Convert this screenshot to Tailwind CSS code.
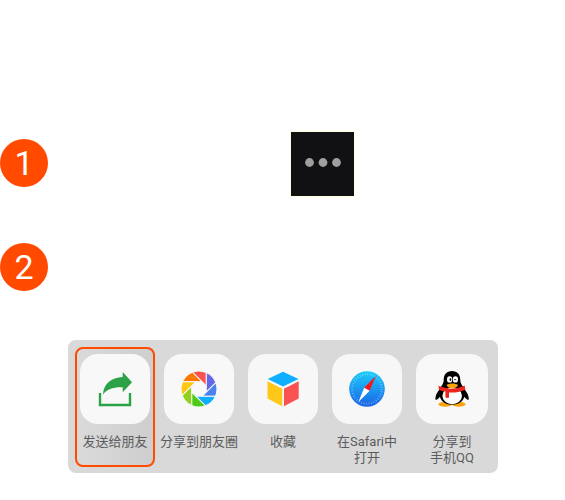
<!DOCTYPE html>
<html lang="zh-CN">
<head>
<meta charset="utf-8">
<meta name="viewport" content="width=device-width, initial-scale=1">
<title>发送给朋友</title>
<script src="https://cdn.jsdelivr.net/npm/@tailwindcss/browser@4"></script>
</head>
<body class="bg-white font-['Roboto','Noto_Sans_CJK_SC',sans-serif]">
<main class="pt-[132px]">
  <ol>
    <li class="flex items-start">
      <div class="pt-[7px]"><span class="flex size-12 items-center justify-center rounded-full bg-[#ff4a00] text-[34px] leading-none text-white">1</span></div>
      <button type="button" aria-label="更多" class="ml-[243px] flex h-16 w-[63px] items-center justify-center bg-[#111113] ring-1 ring-[#ffffdc]">
        <svg class="h-16 w-[63px]" viewBox="0 0 63 64" fill="#9f9f9f"><circle cx="18.5" cy="30.5" r="4.4"/><circle cx="32" cy="30.5" r="4.4"/><circle cx="45.5" cy="30.5" r="4.4"/></svg>
      </button>
    </li>
    <li class="pt-[47px]">
      <span class="flex size-12 items-center justify-center rounded-full bg-[#ff4a00] text-[34px] leading-none text-white">2</span>
      <div class="mt-[49px] ml-[68px] flex w-fit gap-1 rounded-lg bg-[#d9d9d9] pt-[7px] pr-[5px] pb-[6px] pl-[7px] text-[13px] leading-4 text-[#5c5c5c]">
        <button type="button" class="flex h-[120px] w-20 flex-col items-center rounded-lg border-2 border-[#ff4a00] bg-linear-to-r from-[#dadada] to-[#cecece] pt-[5px] whitespace-nowrap">
          <svg class="size-[70px] rounded-[18px] bg-[#f8f8f8]" viewBox="0 0 70 70">
            <path d="M20 39V51H50V39" fill="none" stroke="#2ba245" stroke-width="2.4"/>
            <path d="M52 28.3L42.7 18V23C31 23.5 23.5 30 23 40.5C27 35 33 33 42.7 33.3V38.3Z" fill="#2ba245"/>
          </svg>
          <span class="mt-2.5">发送给朋友</span>
        </button>
        <button type="button" class="flex h-[120px] w-20 flex-col items-center pt-[7px] whitespace-nowrap">
          <svg class="size-[70px] rounded-[18px] bg-[#f8f8f8]" viewBox="0 0 70 70">
            <defs><path id="blade" d="M-16.4 -7.3A18 18 0 0 1 -6.4 -16.8L3 -7.3Z"/></defs>
            <g transform="translate(35 35)" stroke="#f8f8f8" stroke-width="1">
              <use href="#blade" fill="#ff7900"/>
              <use href="#blade" fill="#fa5151" transform="rotate(45)"/>
              <use href="#blade" fill="#6467e6" transform="rotate(90)"/>
              <use href="#blade" fill="#4b82ee" transform="rotate(135)"/>
              <use href="#blade" fill="#10aeff" transform="rotate(180)"/>
              <use href="#blade" fill="#4ecb18" transform="rotate(225)"/>
              <use href="#blade" fill="#91d11d" transform="rotate(270)"/>
              <use href="#blade" fill="#ffc718" transform="rotate(315)"/>
            </g>
          </svg>
          <span class="mt-2.5">分享到朋友圈</span>
        </button>
        <button type="button" class="flex h-[120px] w-20 flex-col items-center pt-[7px] whitespace-nowrap">
          <svg class="size-[70px] rounded-[18px] bg-[#f7f7f7]" viewBox="0 0 70 70">
            <path d="M19.7 25L35 17.7L50.5 25L35 32.6Z" fill="#10aeff"/>
            <path d="M19.5 27.2L34.2 34.8V52.2L19.5 44.6Z" fill="#ffc718"/>
            <path d="M50.7 27.2L36 34.8V52.2L50.7 44.6Z" fill="#fa5151"/>
          </svg>
          <span class="mt-2.5">收藏</span>
        </button>
        <button type="button" class="flex h-[120px] w-20 flex-col items-center pt-[7px] whitespace-nowrap">
          <svg class="size-[70px] rounded-[18px] bg-[#f7f7f7]" viewBox="0 0 70 70">
            <defs><linearGradient id="sky" x2="0" y2="1"><stop stop-color="#1bcdfb"/><stop offset="1" stop-color="#1b63e6"/></linearGradient></defs>
            <circle cx="35" cy="35" r="17.8" fill="url(#sky)"/>
            <circle cx="35" cy="35" r="14.8" fill="none" stroke="#fff" stroke-opacity=".45" stroke-width="2" stroke-dasharray=".7 1.88"/>
            <path d="M43.8 22L32.2 33.8L37.6 36.8Z" fill="#f8161b"/>
            <path d="M26.4 48L32.2 33.8L37.6 36.8Z" fill="#fff"/>
          </svg>
          <span class="mt-2.5">在Safari中<br>打开</span>
        </button>
        <button type="button" class="flex h-[120px] w-[82px] flex-col items-center pt-[7px] whitespace-nowrap">
          <svg class="h-[70px] w-[72px] rounded-[18px] bg-[#f8f8f8]" viewBox="0 0 72 70">
            <ellipse cx="29.2" cy="50.2" rx="6.6" ry="2.5" fill="#faa40a"/>
            <ellipse cx="42.8" cy="50.2" rx="6.6" ry="2.5" fill="#faa40a"/>
            <path d="M36 17C30.5 17 27.7 20.5 27.7 26C27.7 30 25 32 23.6 35.5C21 38.5 19 42 19.4 45.5C20.5 46.6 22.5 44.8 23.8 42.8C25.5 48 30 50.8 36 50.8C42 50.8 46.8 48 48.4 42.8C49.8 44.8 51.6 46.6 52.8 45.5C53.2 42 51 38.5 48.6 35.5C47 32 44.3 30 44.3 26C44.3 20.5 41.5 17 36 17Z" fill="#000"/>
            <ellipse cx="36.2" cy="41.8" rx="9.8" ry="8.4" fill="#fff"/>
            <path d="M22.6 31.8C31 35.6 41 35.6 48.6 31.6L49.4 35.8C43 38.6 37 38.8 33 38.4V43.6C32 44.2 30.2 44 29.4 43.2V37.6C26.5 37.2 24.5 36.4 22.8 35.4Z" fill="#ed251d"/>
            <ellipse cx="33.6" cy="25.4" rx="2.6" ry="3.2" fill="#fff"/>
            <ellipse cx="39.4" cy="25.4" rx="2.6" ry="3.2" fill="#fff"/>
            <ellipse cx="34.4" cy="25.6" rx=".9" ry="1.3" fill="#000"/>
            <path d="M38.2 26.2Q39.1 23.8 40.2 26.2" fill="none" stroke="#000" stroke-width=".8"/>
            <path d="M30.6 31C33 29 39.4 29 42 31C41.4 33.2 38.8 34.3 36.3 34.3C33.8 34.3 31.2 33.2 30.6 31Z" fill="#faa40a"/>
          </svg>
          <span class="mt-2.5">分享到<br>手机QQ</span>
        </button>
      </div>
    </li>
  </ol>
</main>
</body>
</html>
